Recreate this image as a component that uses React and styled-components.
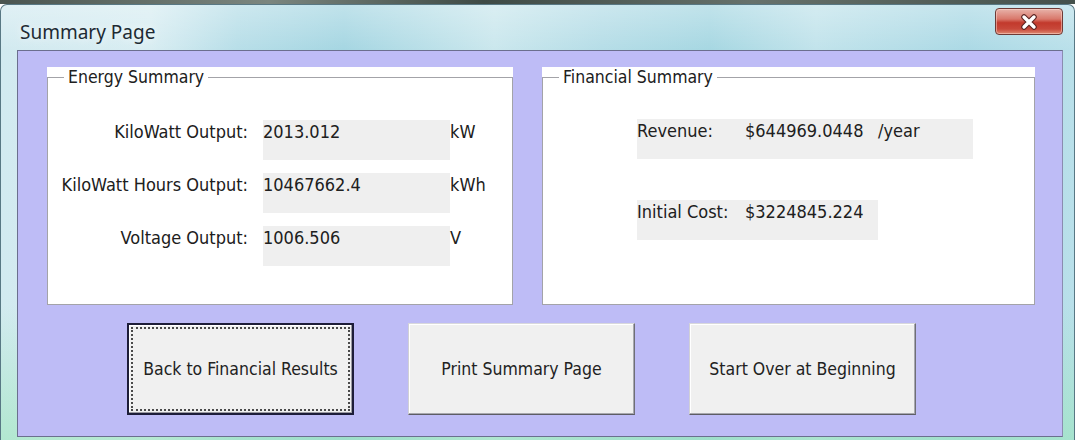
import React from "react";
import styled, { createGlobalStyle, css } from "styled-components";

const UI_FONT = `"DejaVu Sans Condensed", "DejaVu Sans", sans-serif`;

const GlobalStyle = createGlobalStyle`
  html, body {
    margin: 0;
    padding: 0;
    background: #ffffff;
  }
  body {
    width: 1084px;
    height: 440px;
    overflow: hidden;
    font-family: ${UI_FONT};
  }
`;

const energyRows = [
  { label: "KiloWatt Output:", value: "2013.012", unit: "kW" },
  { label: "KiloWatt Hours Output:", value: "10467662.4", unit: "kWh" },
  { label: "Voltage Output:", value: "1006.506", unit: "V" },
];

const financialRows = [
  { label: "Revenue:", value: "$644969.0448", unit: "/year", width: 336 },
  { label: "Initial Cost:", value: "$3224845.224", unit: "", width: 241 },
];

const buttons = [
  { text: "Back to Financial Results", isDefault: true },
  { text: "Print Summary Page" },
  { text: "Start Over at Beginning" },
];

const App = () => {
  return (
    <>
      <GlobalStyle />
      <Screen>
        <Backdrop />
        <Window>
          <TitleBar>
            <Title>Summary Page</Title>
            <CloseButton aria-label="Close">
              <svg width="22" height="16" viewBox="0 0 22 16">
                <path
                  d="M6 3 L16 13 M16 3 L6 13"
                  stroke="#5a2320"
                  strokeWidth="5.5"
                  strokeLinecap="round"
                />
                <path
                  d="M6 3 L16 13 M16 3 L6 13"
                  stroke="#ffffff"
                  strokeWidth="3.4"
                  strokeLinecap="round"
                />
              </svg>
            </CloseButton>
          </TitleBar>

          <Client>
            <PanelRow>
              <Panel $width={466}>
                <Group>
                  <Legend>Energy Summary</Legend>
                  <EnergyGrid>
                    {energyRows.map((row) => (
                      <React.Fragment key={row.label}>
                        <FieldLabel>{row.label}</FieldLabel>
                        <ValueBox>{row.value}</ValueBox>
                        <Unit>{row.unit}</Unit>
                      </React.Fragment>
                    ))}
                  </EnergyGrid>
                </Group>
              </Panel>

              <Panel $width={493}>
                <Group>
                  <Legend>Financial Summary</Legend>
                  <FinanceList>
                    {financialRows.map((row) => (
                      <FinanceBox key={row.label} $width={row.width}>
                        <FinanceLabel>{row.label}</FinanceLabel>
                        <FinanceValue>{row.value}</FinanceValue>
                        {row.unit && <span>{row.unit}</span>}
                      </FinanceBox>
                    ))}
                  </FinanceList>
                </Group>
              </Panel>
            </PanelRow>

            <ButtonRow>
              {buttons.map((b) => (
                <Button key={b.text} $default={b.isDefault}>
                  <Face $focused={b.isDefault}>{b.text}</Face>
                </Button>
              ))}
            </ButtonRow>
          </Client>
        </Window>
      </Screen>
    </>
  );
};

const Screen = styled.div`
  width: 1084px;
  height: 440px;
  display: flex;
  flex-direction: column;
  background: #ffffff;
`;

const Backdrop = styled.div`
  width: 1075px;
  height: 4px;
  background: linear-gradient(
    90deg,
    #4a5550 0%,
    #7b867f 25%,
    #3e4a45 45%,
    #66716b 70%,
    #45514c 100%
  );
`;

const Window = styled.div`
  flex: 1;
  width: 1075px;
  box-sizing: border-box;
  display: flex;
  flex-direction: column;
  padding: 0 11px 3px 16px;
  border: 1px solid #587884;
  border-bottom: none;
  border-radius: 7px 7px 0 0;
  background:
    linear-gradient(180deg, rgba(255, 255, 255, 0.3) 0px, rgba(255, 255, 255, 0) 46px),
    linear-gradient(180deg, rgba(150, 230, 180, 0) 300px, rgba(150, 230, 180, 0.55) 440px),
    linear-gradient(
      90deg,
      #d2eaf0 0%,
      #d8edf2 14%,
      #b7dee8 22%,
      #a5d6e2 32%,
      #cae7ed 46%,
      #b5dde7 56%,
      #a6d7e2 66%,
      #c1e3eb 76%,
      #abd9e5 90%,
      #b9e0ea 100%
    );
`;

const TitleBar = styled.div`
  height: 45px;
  display: flex;
  justify-content: space-between;
  align-items: flex-start;
  padding-left: 3px;
`;

const Title = styled.div`
  margin-top: 15px;
  font-family: "Noto Sans", "Open Sans", sans-serif;
  font-size: 19px;
  line-height: 24px;
  color: #1d2a33;
  text-shadow: 0 0 8px rgba(255, 255, 255, 0.9);
`;

const CloseButton = styled.div`
  margin-top: 3px;
  width: 68px;
  height: 27px;
  box-sizing: border-box;
  display: flex;
  align-items: center;
  justify-content: center;
  border: 1px solid #6e3a36;
  border-radius: 4px;
  background: linear-gradient(
    180deg,
    #e8b3aa 0%,
    #d9786b 40%,
    #c2392c 55%,
    #c8483a 80%,
    #de8a72 100%
  );
  box-shadow: inset 0 0 0 1px rgba(255, 220, 210, 0.5);
`;

const Client = styled.div`
  flex: 1;
  display: flex;
  flex-direction: column;
  border: 1px solid #6b6f8e;
  border-right-color: #8a8db0;
  background: #bebcf6;
`;

const PanelRow = styled.div`
  display: flex;
  gap: 29px;
  padding: 16px 0 0 29px;
`;

const Panel = styled.div`
  width: ${(p) => p.$width}px;
  height: 238px;
  background: #ffffff;
  display: flex;
`;

const Group = styled.fieldset`
  flex: 1;
  margin: 0;
  padding: 0;
  min-width: 0;
  border: 1px solid #a3a3a8;
  box-shadow: inset 1px 1px 0 #ffffff;
`;

const Legend = styled.legend`
  margin-left: 16px;
  padding: 0 4px;
  font-size: 17.5px;
  line-height: 20px;
  color: #202020;
`;

const EnergyGrid = styled.div`
  display: grid;
  grid-template-columns: 200px 187px auto;
  grid-auto-rows: 40px;
  column-gap: 15px;
  row-gap: 13px;
  margin-top: 33px;
  font-size: 18px;
  line-height: 20px;
  color: #202020;
`;

const FieldLabel = styled.div`
  text-align: right;
  padding-top: 2px;
  white-space: nowrap;
`;

const ValueBox = styled.div`
  background: #efefef;
  padding-top: 2px;
  white-space: nowrap;
`;

const Unit = styled.div`
  margin-left: -15px;
  padding-top: 2px;
`;

const FinanceList = styled.div`
  display: flex;
  flex-direction: column;
  align-items: flex-start;
  gap: 41px;
  margin: 32px 0 0 94px;
`;

const FinanceBox = styled.div`
  width: ${(p) => p.$width}px;
  height: 40px;
  box-sizing: border-box;
  display: flex;
  padding-top: 2px;
  background: #efefef;
  font-size: 18px;
  line-height: 20px;
  color: #202020;
  white-space: nowrap;
`;

const FinanceLabel = styled.span`
  width: 108px;
`;

const FinanceValue = styled.span`
  width: 133px;
`;

const ButtonRow = styled.div`
  display: flex;
  gap: 54px;
  padding-left: 109px;
  margin-top: 18px;
`;

const Button = styled.button`
  width: 227px;
  height: 92px;
  box-sizing: border-box;
  display: flex;
  padding: 3px;
  background: #f0f0f0;
  border: 1px solid;
  border-color: #d8d8dc #6f6f76 #5d5d64 #d0d0d6;
  box-shadow: inset -1px -1px 0 #a8a8ae, inset 1px 1px 0 #ffffff;
  font-family: ${UI_FONT};
  font-size: 17.5px;
  color: #222222;
  cursor: pointer;

  ${(p) =>
    p.$default &&
    css`
      padding: 2px;
      border: 2px solid #1d1d38;
      box-shadow: inset -1px -1px 0 #9a9aa0, inset 1px 1px 0 #ffffff;
    `}
`;

const Face = styled.span`
  flex: 1;
  display: flex;
  align-items: center;
  justify-content: center;
  border: 1px dotted transparent;

  ${(p) =>
    p.$focused &&
    css`
      border: 2px dotted #4a4a4a;
    `}
`;

export default App;
